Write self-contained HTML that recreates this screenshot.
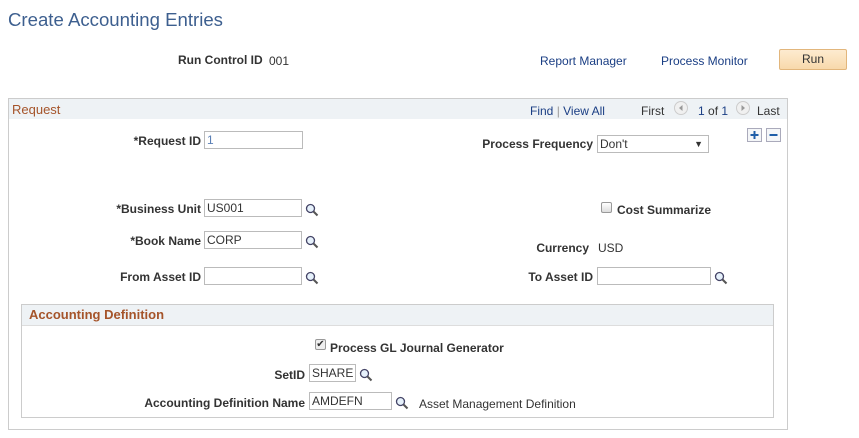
<!DOCTYPE html>
<html><head><style>
body{margin:0;width:859px;height:438px;background:#fff;font-family:"Liberation Sans",Arial,sans-serif;font-size:12px;color:#333;position:relative;overflow:hidden}
.a{position:absolute;white-space:nowrap}
.l{position:absolute;white-space:nowrap;font-weight:bold;text-align:right;color:#333}
.in{position:absolute;border:1px solid #bbb;background:#fff;box-sizing:border-box;height:18px;padding:0 2px;line-height:16px;font-size:12px;color:#333}
.lk{color:#1a3e84}
.mg{position:absolute;width:14px;height:14px}
</style></head><body>
<div class="a" style="left:8px;top:9px;font-size:18.6px;color:#3d5f8f">Create Accounting Entries</div>
<div class="l" style="left:178px;top:53px">Run Control ID</div>
<div class="a" style="left:269px;top:54px">001</div>
<div class="a lk" style="left:540px;top:54px">Report Manager</div>
<div class="a lk" style="left:661px;top:54px">Process Monitor</div>
<div class="a" style="left:779px;top:49px;width:66px;height:19px;border:1px solid #e2b67c;border-radius:2px;background:linear-gradient(#fdebd0,#f8d9ab);text-align:center;line-height:19px;color:#333">Run</div>

<div class="a" style="left:8px;top:98px;width:780px;height:332px;border:1px solid #ccc;box-sizing:border-box"></div>
<div class="a" style="left:9px;top:99px;width:778px;height:20px;background:#eef2f5"></div>
<div class="a" style="left:12px;top:102px;color:#a5542a;font-size:13px">Request</div>
<div class="a lk" style="left:530px;top:104px">Find <span style="color:#999">|</span> View All</div>
<div class="a" style="left:641px;top:104px;color:#333">First</div>
<svg class="a" style="left:674px;top:101px" width="14" height="14"><circle cx="7" cy="7" r="6.5" fill="#f0f0f0" stroke="#ccc"/><path d="M8.5 4v6L5 7z" fill="#999"/></svg>
<div class="a lk" style="left:698px;top:104px">1 <span style="color:#333">of</span> 1</div>
<svg class="a" style="left:736px;top:101px" width="14" height="14"><circle cx="7" cy="7" r="6.5" fill="#f0f0f0" stroke="#ccc"/><path d="M5.5 4v6L9 7z" fill="#999"/></svg>
<div class="a" style="left:757px;top:104px;color:#333">Last</div>
<svg class="a" style="left:747px;top:128px" width="15" height="14"><rect x=".5" y=".5" width="14" height="13" fill="#f4f6f8" stroke="#aab"/><path d="M7.5 3v8M3.5 7h8" stroke="#1f5ea8" stroke-width="2"/></svg>
<svg class="a" style="left:766px;top:128px" width="15" height="14"><rect x=".5" y=".5" width="14" height="13" fill="#f4f6f8" stroke="#aab"/><path d="M3.5 7h8" stroke="#1f5ea8" stroke-width="2"/></svg>

<div class="l" style="right:658px;top:134px">*Request ID</div>
<div class="in" style="left:204px;top:131px;width:99px;color:#5a7fb5">1</div>
<div class="l" style="right:266px;top:137px">Process Frequency</div>
<div class="in" style="left:597px;top:135px;width:112px">Don't<span style="position:absolute;right:5px;font-size:9px">▼</span></div>

<div class="l" style="right:658px;top:202px">*Business Unit</div>
<div class="in" style="left:204px;top:199px;width:98px">US001</div>
<svg class="mg" style="left:305px;top:203px"><circle cx="5.5" cy="5.5" r="4" fill="#e6f1fb" stroke="#446" stroke-width="1.3"/><path d="M8.5 8.5l4 4" stroke="#555" stroke-width="2"/></svg>
<div class="a" style="left:601px;top:202px;width:11px;height:11px;border:1px solid #999;border-radius:2px;background:linear-gradient(#fff,#ddd);box-sizing:border-box"></div>
<div class="l" style="left:617px;top:203px">Cost Summarize</div>

<div class="l" style="right:658px;top:234px">*Book Name</div>
<div class="in" style="left:204px;top:231px;width:98px">CORP</div>
<svg class="mg" style="left:305px;top:235px"><circle cx="5.5" cy="5.5" r="4" fill="#e6f1fb" stroke="#446" stroke-width="1.3"/><path d="M8.5 8.5l4 4" stroke="#555" stroke-width="2"/></svg>
<div class="l" style="right:270px;top:241px">Currency</div>
<div class="a" style="left:598px;top:241px">USD</div>

<div class="l" style="right:658px;top:270px">From Asset ID</div>
<div class="in" style="left:204px;top:267px;width:98px"></div>
<svg class="mg" style="left:305px;top:271px"><circle cx="5.5" cy="5.5" r="4" fill="#e6f1fb" stroke="#446" stroke-width="1.3"/><path d="M8.5 8.5l4 4" stroke="#555" stroke-width="2"/></svg>
<div class="l" style="right:266px;top:270px">To Asset ID</div>
<div class="in" style="left:597px;top:267px;width:114px"></div>
<svg class="mg" style="left:714px;top:271px"><circle cx="5.5" cy="5.5" r="4" fill="#e6f1fb" stroke="#446" stroke-width="1.3"/><path d="M8.5 8.5l4 4" stroke="#555" stroke-width="2"/></svg>

<div class="a" style="left:21px;top:304px;width:753px;height:114px;border:1px solid #ccc;box-sizing:border-box"></div>
<div class="a" style="left:22px;top:305px;width:751px;height:20px;background:#eef2f5;border-bottom:1px solid #ddd"></div>
<div class="a" style="left:29px;top:307px;color:#a5542a;font-size:13px;font-weight:bold">Accounting Definition</div>
<div class="a" style="left:315px;top:339px;width:11px;height:11px;border:1px solid #999;border-radius:2px;background:#eee;box-sizing:border-box;font-size:10px;line-height:9px;text-align:center">✔</div>
<div class="l" style="left:330px;top:341px">Process GL Journal Generator</div>
<div class="l" style="right:554px;top:368px">SetID</div>
<div class="in" style="left:309px;top:364px;width:47px">SHARE</div>
<svg class="mg" style="left:359px;top:368px"><circle cx="5.5" cy="5.5" r="4" fill="#e6f1fb" stroke="#446" stroke-width="1.3"/><path d="M8.5 8.5l4 4" stroke="#555" stroke-width="2"/></svg>
<div class="l" style="right:554px;top:396px">Accounting Definition Name</div>
<div class="in" style="left:309px;top:392px;width:83px">AMDEFN</div>
<svg class="mg" style="left:395px;top:396px"><circle cx="5.5" cy="5.5" r="4" fill="#e6f1fb" stroke="#446" stroke-width="1.3"/><path d="M8.5 8.5l4 4" stroke="#555" stroke-width="2"/></svg>
<div class="a" style="left:419px;top:397px">Asset Management Definition</div>
</body></html>
